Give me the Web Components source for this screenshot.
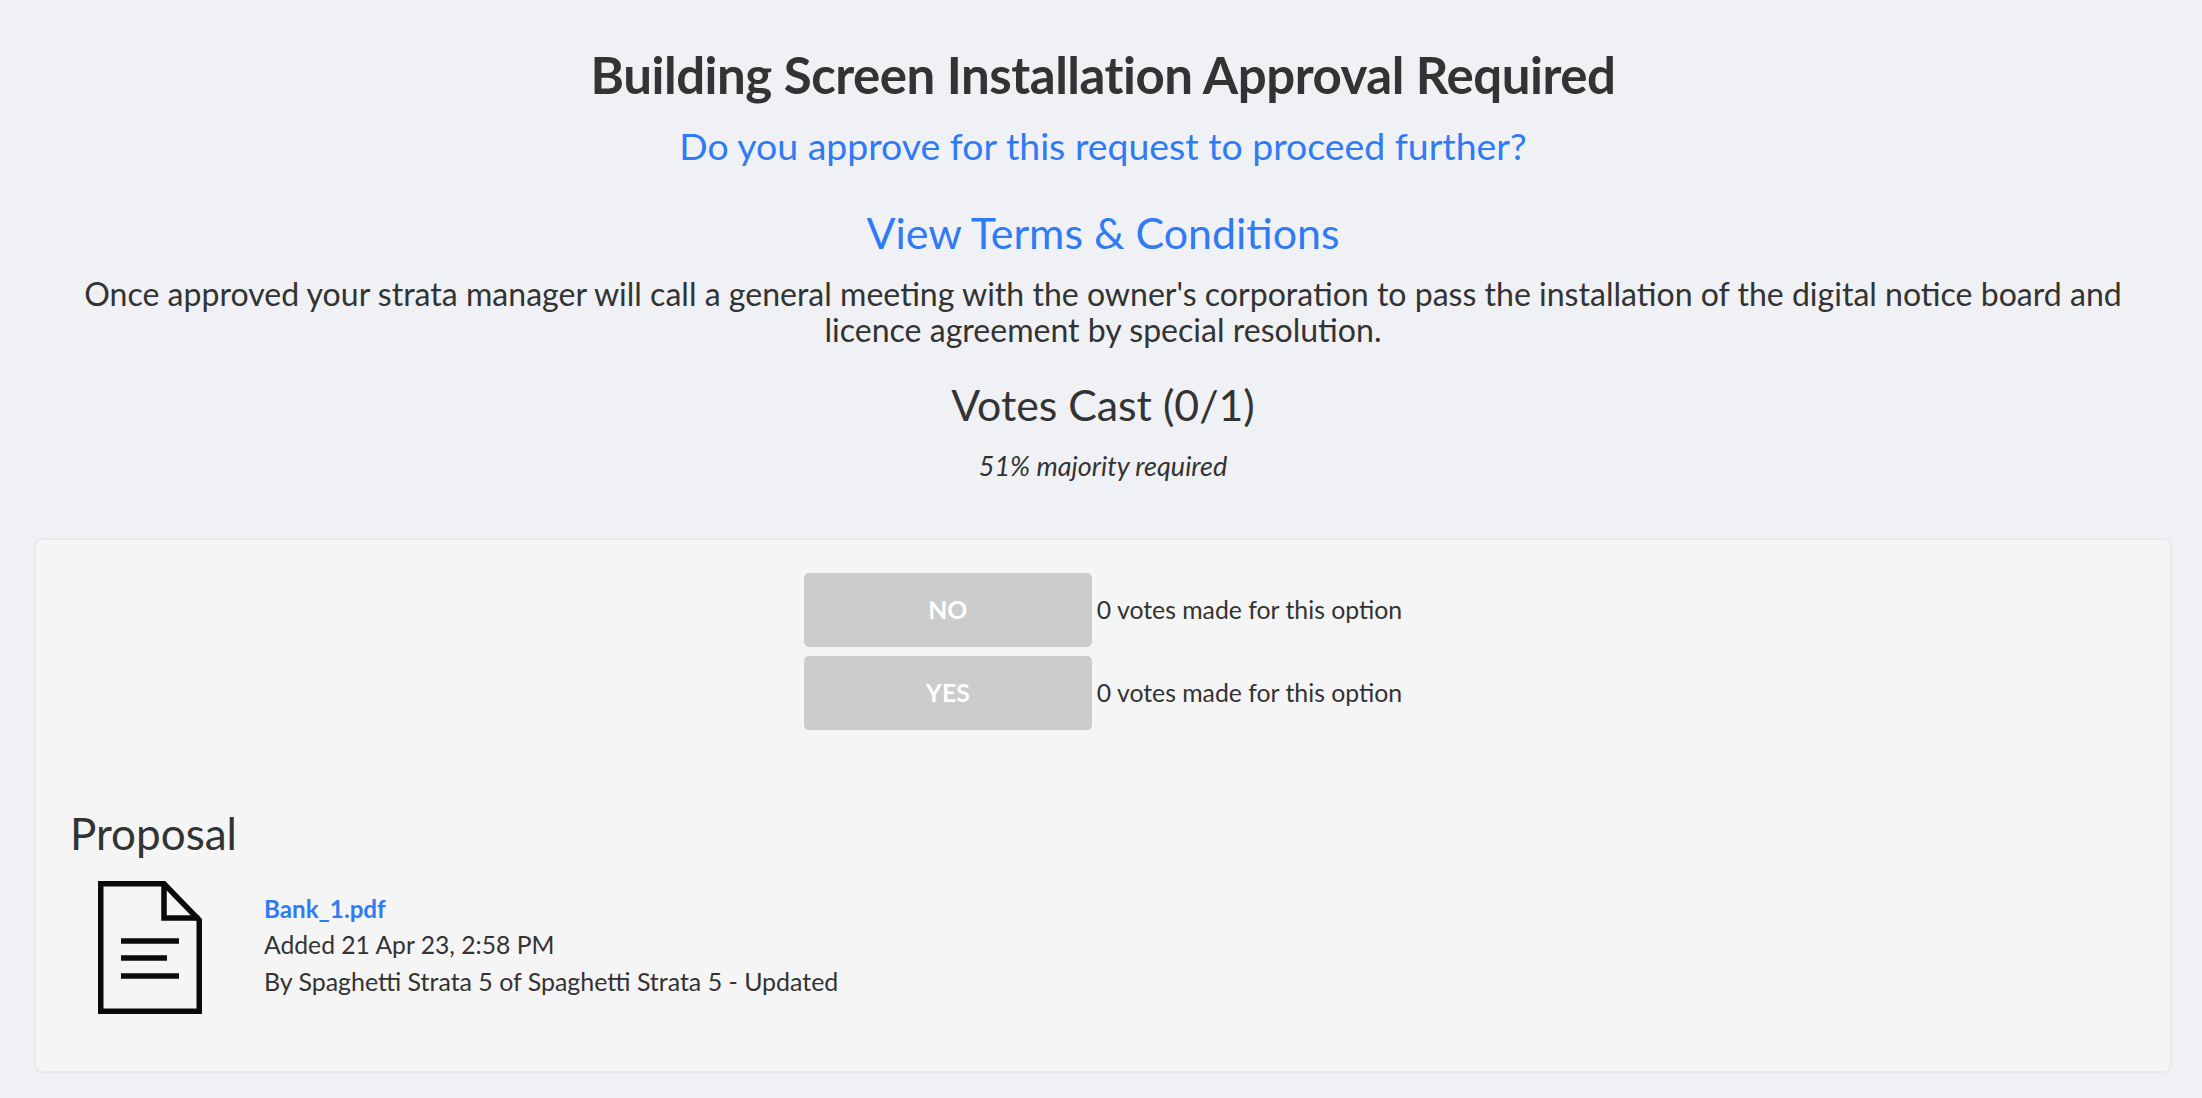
<!DOCTYPE html>
<html lang="en">
<head>
<meta charset="UTF-8" />
<title>Building Screen Installation Approval Required</title>
<style>
	html, body { margin: 0; background: #eff1f5; }
	body { font-family: Lato, "Open Sans", sans-serif; color: #333; height: 1098px; overflow: hidden; }
</style>
</head>
<body>
<template id="vote-header-tpl">
	<style>
		:host { display: block; text-align: center; padding: 47px 32px 0 36px; }
		h1 { margin: 0; font-size: 51px; line-height: 56px; font-weight: 700; letter-spacing: -0.48px; }
		.ask { margin: 20px 0 0; font-size: 37.4px; line-height: 46px; color: #2f7bf5; }
		.terms { display: block; margin-top: 35px; font-size: 42.9px; line-height: 58px; color: #2f7bf5; text-decoration: none; }
		.note { margin: 14px 0 0; font-size: 32.05px; line-height: 36px; }
		h2 { margin: 30px 0 0; font-size: 42.8px; line-height: 54px; font-weight: 400; }
		.majority { margin: 18px 0 0; font-size: 27px; line-height: 32px; font-style: italic; }
	</style>
	<h1><slot name="title"></slot></h1>
	<p class="ask"><slot name="ask"></slot></p>
	<a class="terms" href="#"><slot name="terms"></slot></a>
	<p class="note"><slot name="note"></slot></p>
	<h2><slot name="votes"></slot></h2>
	<p class="majority"><slot name="majority"></slot></p>
</template>

<template id="vote-card-tpl">
	<style>
		:host { display: block; box-sizing: border-box; margin: 56px 30px 0 34px; height: 535px; padding: 33px 34px 0; background: #f5f5f5; border: 2px solid #e9e9eb; border-radius: 8px; }
		.options { display: grid; gap: 9px; justify-content: center; }
		h3 { margin: 76px 0 0; font-size: 44px; line-height: 54px; font-weight: 400; }
	</style>
	<div class="options"><slot name="option"></slot></div>
	<h3><slot name="heading"></slot></h3>
	<slot></slot>
</template>

<template id="vote-option-tpl">
	<style>
		:host { display: flex; align-items: center; gap: 5px; font-size: 24.8px; }
		.btn { width: 288px; height: 74px; display: grid; place-items: center; background: #ccc; color: #fff; font-weight: 700; border-radius: 5px; }
		.btn, span { padding-bottom: 1px; box-sizing: border-box; }
	</style>
	<div class="btn"><slot name="label"></slot></div>
	<span><slot></slot></span>
</template>

<template id="file-row-tpl">
	<style>
		:host { display: flex; align-items: center; gap: 62px; margin: 21px 0 0 28px; font-size: 24.95px; line-height: 36px; }
		svg { display: block; width: 104px; height: 133px; flex: none; }
		.text { padding-bottom: 5px; }
		.name { display: block; color: #2f7bf5; font-size: 24.2px; font-weight: 700; text-decoration: none; }
		.added { font-size: 24.7px; }
	</style>
	<svg viewBox="0 0 104 133" fill="none" stroke="#0a0a0a" stroke-width="5.5">
		<path d="M2.75 2.75H66L101.25 39V130.25H2.75Z" />
		<path d="M66 2.75V37H101.25" />
		<path d="M23 60H81M23 77H69M23 95H81" />
	</svg>
	<div class="text">
		<a class="name" href="#"><slot name="name"></slot></a>
		<div class="added"><slot name="added"></slot></div>
		<div><slot name="by"></slot></div>
	</div>
</template>

<vote-header>
	<span slot="title">Building Screen Installation Approval Required</span>
	<span slot="ask">Do you approve for this request to proceed further?</span>
	<span slot="terms">View Terms &amp; Conditions</span>
	<span slot="note">Once approved your strata manager will call a general meeting with the owner's corporation to pass the installation of the digital notice board and licence agreement by special resolution.</span>
	<span slot="votes">Votes Cast (0/1)</span>
	<span slot="majority">51% majority required</span>
</vote-header>

<vote-card>
	<vote-option slot="option"><span slot="label">NO</span>0 votes made for this option</vote-option>
	<vote-option slot="option"><span slot="label">YES</span>0 votes made for this option</vote-option>
	<span slot="heading">Proposal</span>
	<file-row>
		<span slot="name">Bank_1.pdf</span>
		<span slot="added">Added 21 Apr 23, 2:58 PM</span>
		<span slot="by">By Spaghetti Strata 5 of Spaghetti Strata 5 - Updated</span>
	</file-row>
</vote-card>

<script>
	for (const [tag, tpl] of [
		["vote-header", "vote-header-tpl"],
		["vote-card", "vote-card-tpl"],
		["vote-option", "vote-option-tpl"],
		["file-row", "file-row-tpl"],
	]) {
		customElements.define(
			tag,
			class extends HTMLElement {
				constructor() {
					super();
					this.attachShadow({ mode: "open" }).appendChild(
						document.getElementById(tpl).content.cloneNode(true)
					);
				}
			}
		);
	}
</script>
</body>
</html>
